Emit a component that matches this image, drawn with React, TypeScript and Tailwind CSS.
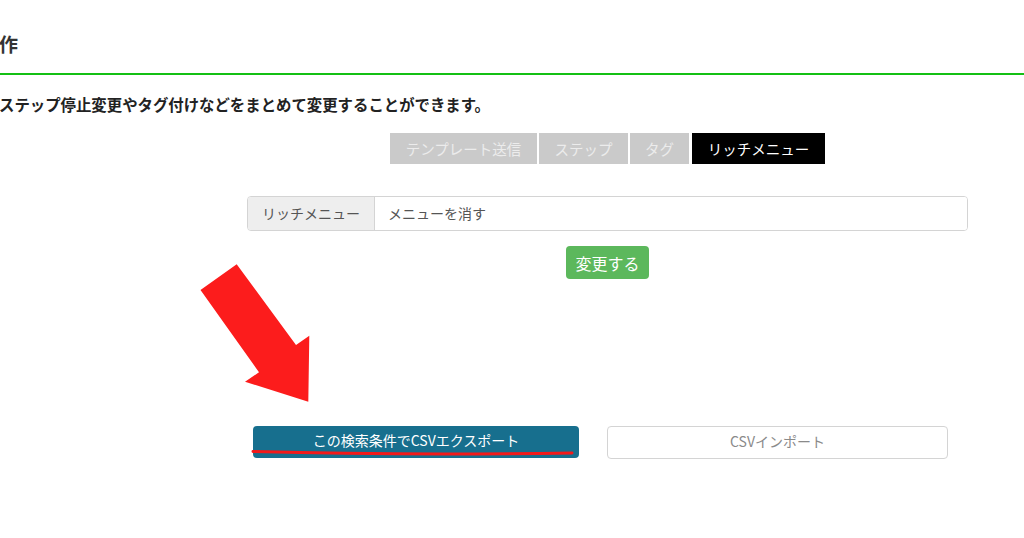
import React from "react";

const font = { fontFamily: '"Noto Sans CJK JP", "Noto Sans", sans-serif' };

export default function App() {
  return (
    <div className="relative w-[1024px] h-[538px] overflow-hidden bg-white text-[#333]" style={font}>
      <div className="h-[75px] pt-[32px] border-b-2 border-[#14c014]">
        <div className="text-[19px] leading-[24px] font-bold text-[#333] -ml-[1px]">作</div>
      </div>
      <div className="mt-[19px] text-[15.4px] leading-[20px] font-bold text-[#222] -ml-[1px] whitespace-nowrap">
        ステップ停止変更やタグ付けなどをまとめて変更することができます。
      </div>
      <div className="mt-[19px] ml-[390px] flex gap-[2px] text-[14.5px] leading-[31px]">
        <div className="w-[147px] h-[31px] bg-[#cacaca] text-[#ececec] text-center">テンプレート送信</div>
        <div className="w-[89px] h-[31px] bg-[#cacaca] text-[#ececec] text-center">ステップ</div>
        <div className="w-[59px] h-[31px] bg-[#cacaca] text-[#ececec] text-center">タグ</div>
        <div className="w-[133px] h-[31px] bg-black text-white text-center ml-[1px]">リッチメニュー</div>
      </div>
      <div className="mt-[32px] ml-[247px] w-[721px]">
        <div className="flex h-[35px] border border-[#d4d4d4] rounded-[4px] overflow-hidden text-[14px]">
          <div className="w-[127px] bg-[#eeeeee] border-r border-[#d4d4d4] flex items-center justify-center text-[#555]">
            リッチメニュー
          </div>
          <div className="flex-1 flex items-center pl-[13px] text-[#555] bg-white">メニューを消す</div>
        </div>
        <div className="mt-[15px] flex justify-center">
          <div className="w-[83px] h-[33px] rounded-[4px] bg-[#5cb85c] text-white text-[16px] flex items-center justify-center">
            変更する
          </div>
        </div>
      </div>
      <div className="mt-[147px] flex">
        <div className="ml-[253px] w-[326px] h-[32px] pb-[4px] rounded-[4px] bg-[#176f8e] text-white text-[14px] flex items-center justify-center">
          この検索条件でCSVエクスポート
        </div>
        <div className="ml-[28px] w-[341px] h-[33px] pb-[2px] rounded-[4px] border border-[#d4d4d4] bg-white text-[#8a8a8a] text-[14px] flex items-center justify-center">
          CSVインポート
        </div>
      </div>
      <svg className="absolute left-0 top-0 pointer-events-none" width="1024" height="538" viewBox="0 0 1024 538">
        <polygon
          points="200.5,290 236.7,264.3 296,345 309.3,335.7 308.3,401.7 245,381.7 259,372.3"
          fill="#fc1c1c"
        />
        <path d="M253 451.5 Q 400 455.5 572 453" stroke="#f31a1a" strokeWidth="3" fill="none" strokeLinecap="round" />
      </svg>
    </div>
  );
}
